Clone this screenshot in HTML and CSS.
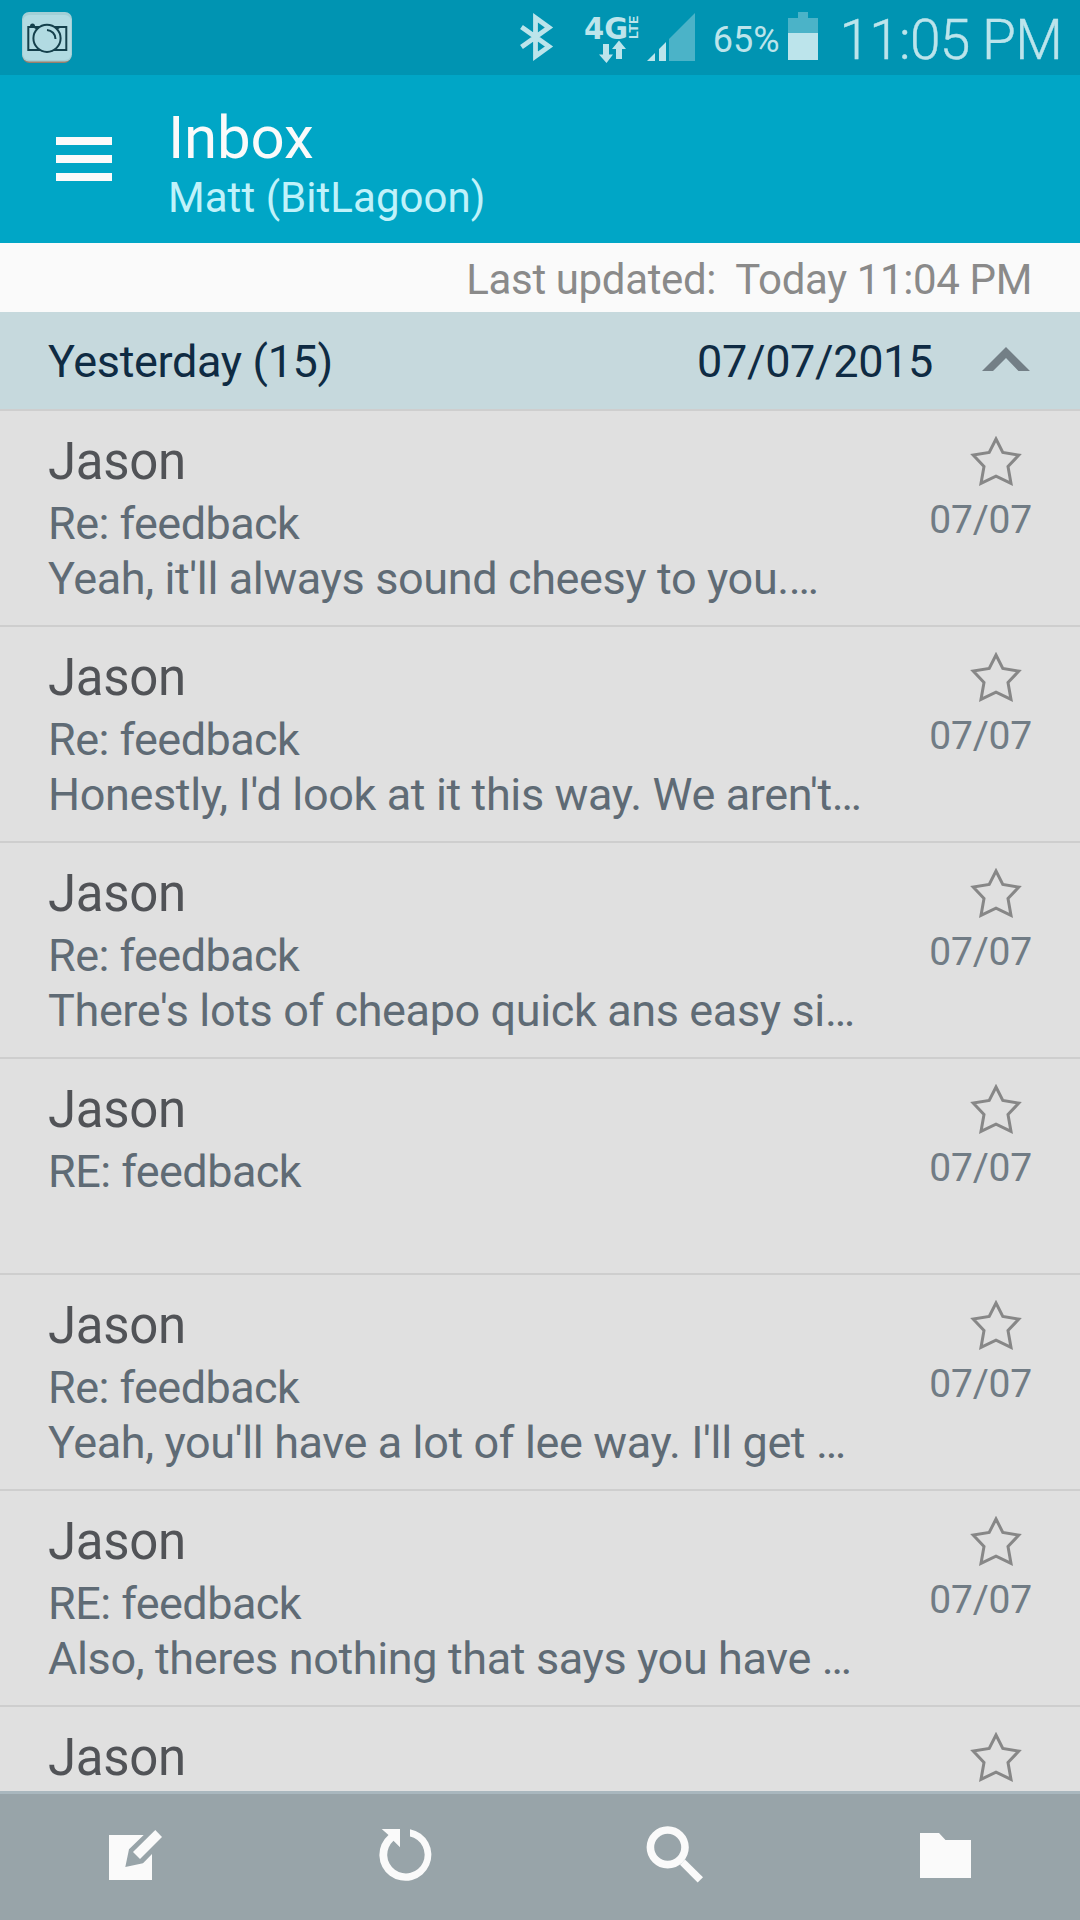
FILE: index.html
```html
<!DOCTYPE html>
<html lang="en">
<head>
    <meta charset="UTF-8">
    <meta name="viewport" content="width=device-width, initial-scale=1.0">
    <title>Inbox</title>
    <link rel="stylesheet" href="styles.css">
</head>
<body>
    <svg class="defs" width="0" height="0">
        <symbol id="star" viewBox="0 0 52 50">
            <path d="M26 3L32.800 16.500L48.800 19.100L38 30.500L41 47.400L26 40.200L11 47.400L14 30.500L3.200 19.100L19.200 16.500Z" fill="none" stroke="#878787" stroke-width="3"/>
        </symbol>
    </svg>

    <div class="status-bar">
        <svg class="camera" width="50" height="51" viewBox="0 0 50 51">
            <rect x="0.500" y="3" width="48.500" height="48" rx="7" fill="#9b7f6b"/>
            <rect x="0" y="0" width="50" height="49.500" rx="7" fill="#a3cfd6"/>
            <rect x="1" y="3" width="48" height="45" rx="6" fill="#b2dbe2"/>
            <g fill="none" stroke="#15404c" stroke-width="2">
                <path d="M6.300 15H44.300V38H6.300Z"/>
                <path d="M12 15L17 18M38 15L33 18" stroke-width="1.500"/>
                <circle cx="25" cy="26.300" r="13.600" fill="#b2dbe2"/>
                <path d="M25 18A9 9 0 0 1 33.500 27"/>
            </g>
            <path d="M8 14A2.500 2.500 0 0 1 13 14Z" fill="#15404c"/>
        </svg>

        <div class="status-icons">
            <svg class="bluetooth" width="34" height="48" viewBox="0 0 34 48">
                <path d="M1.500 14L29 33.500L15.500 43.200V4.800L29 14.500L1.500 34" fill="none" stroke="#bce4eb" stroke-width="4.800"/>
            </svg>
            <svg class="network" width="56" height="50" viewBox="0 0 56 50" fill="#bce4eb">
                <text class="net-4g" x="0" y="27" textLength="44" lengthAdjust="spacingAndGlyphs">4G</text>
                <text class="net-lte" transform="translate(54 27) rotate(-90)" x="0" y="0" textLength="23" lengthAdjust="spacingAndGlyphs">LTE</text>
                <path d="M19 32H25V42.500H29L22.500 51L15 42.500H19ZM35 28.500L42 37H38V47H32V37H28Z"/>
            </svg>
            <svg class="signal" width="48" height="48" viewBox="0 0 48 48">
                <path d="M0 48L8 40V48ZM12 36L19 29V48H12Z" fill="#bce4eb"/>
                <path d="M22 26L48 0V48H22Z" fill="#4bb3c8"/>
            </svg>
            <span class="percent">65%</span>
            <svg class="battery" width="30" height="48" viewBox="0 0 30 48">
                <path d="M10 0H20V6H30V21H0V6H10Z" fill="#4bb3c8"/>
                <path d="M0 21H30V48H0Z" fill="#bce4eb"/>
            </svg>
            <span class="clock">11:05 PM</span>
        </div>
    </div>

    <div class="header">
        <div class="menu">
            <span></span>
            <span></span>
            <span></span>
        </div>
        <div class="titles">
            <div class="title">Inbox</div>
            <div class="account">Matt (BitLagoon)</div>
        </div>
    </div>

    <div class="updated">Last updated:&nbsp; Today 11:04 PM</div>

    <div class="group">
        <span class="group-name">Yesterday (15)</span>
        <span class="group-date">07/07/2015</span>
        <svg width="48" height="24" viewBox="0 0 48 24">
            <path d="M0 24L24 0L48 24H36.500L24 11L11 24Z" fill="#737f86"/>
        </svg>
    </div>

    <div class="list">
        <div class="mail">
            <div class="mail-text">
                <div class="from">Jason</div>
                <div class="subject">Re: feedback</div>
                <div class="preview">Yeah, it'll always sound cheesy to you.…</div>
            </div>
            <div class="mail-side">
                <svg class="star" width="52" height="50"><use href="#star"/></svg>
                <div class="date">07/07</div>
            </div>
        </div>
        <div class="mail">
            <div class="mail-text">
                <div class="from">Jason</div>
                <div class="subject">Re: feedback</div>
                <div class="preview">Honestly, I'd look at it this way. We aren't…</div>
            </div>
            <div class="mail-side">
                <svg class="star" width="52" height="50"><use href="#star"/></svg>
                <div class="date">07/07</div>
            </div>
        </div>
        <div class="mail">
            <div class="mail-text">
                <div class="from">Jason</div>
                <div class="subject">Re: feedback</div>
                <div class="preview">There's lots of cheapo quick ans easy si…</div>
            </div>
            <div class="mail-side">
                <svg class="star" width="52" height="50"><use href="#star"/></svg>
                <div class="date">07/07</div>
            </div>
        </div>
        <div class="mail">
            <div class="mail-text">
                <div class="from">Jason</div>
                <div class="subject">RE: feedback</div>
            </div>
            <div class="mail-side">
                <svg class="star" width="52" height="50"><use href="#star"/></svg>
                <div class="date">07/07</div>
            </div>
        </div>
        <div class="mail">
            <div class="mail-text">
                <div class="from">Jason</div>
                <div class="subject">Re: feedback</div>
                <div class="preview">Yeah, you'll have a lot of lee way. I'll get …</div>
            </div>
            <div class="mail-side">
                <svg class="star" width="52" height="50"><use href="#star"/></svg>
                <div class="date">07/07</div>
            </div>
        </div>
        <div class="mail">
            <div class="mail-text">
                <div class="from">Jason</div>
                <div class="subject">RE: feedback</div>
                <div class="preview">Also, theres nothing that says you have …</div>
            </div>
            <div class="mail-side">
                <svg class="star" width="52" height="50"><use href="#star"/></svg>
                <div class="date">07/07</div>
            </div>
        </div>
        <div class="mail">
            <div class="mail-text">
                <div class="from">Jason</div>
            </div>
            <div class="mail-side">
                <svg class="star" width="52" height="50"><use href="#star"/></svg>
            </div>
        </div>
    </div>

    <div class="toolbar">
        <div class="tool">
            <svg width="60" height="60" viewBox="0 0 60 60" fill="#fafafa">
                <path d="M4 10H38.700L24 24.300L20.300 42L38 38.300L47 29V55H4Z"/>
                <path d="M50.300 5L57 12L35 34L28 27Z"/>
            </svg>
        </div>
        <div class="tool">
            <svg width="60" height="60" viewBox="0 0 60 60" fill="#fafafa">
                <path d="M35 4.200A26 26 0 1 1 13.500 10L6.700 4H25V22.300L18.500 15.800A18.700 18.700 0 1 0 35 11.500Z"/>
            </svg>
        </div>
        <div class="tool">
            <svg width="60" height="60" viewBox="0 0 60 60" fill="#fafafa">
                <circle cx="22.700" cy="22.300" r="17.300" fill="none" stroke="#fafafa" stroke-width="7.600"/>
                <path d="M40 34.500L58 52.300L52.700 57.500L35 39.700Z"/>
            </svg>
        </div>
        <div class="tool">
            <svg width="60" height="60" viewBox="0 0 60 60" fill="#fafafa">
                <path d="M5 8H24L30.500 15H56V53H5Z"/>
            </svg>
        </div>
    </div>
</body>
</html>
```

FILE: styles.css
```css
* {
    box-sizing: border-box;
}

body {
    margin: 0;
    height: 1920px;
    display: flex;
    flex-direction: column;
    overflow: hidden;
    background: #e0e0e0;
    font-family: Roboto, "Noto Sans", sans-serif;
    white-space: nowrap;
}

svg {
    display: block;
    flex-shrink: 0;
}

.defs {
    position: absolute;
}

.status-bar {
    flex: 0 0 75px;
    display: flex;
    justify-content: space-between;
    align-items: flex-start;
    padding: 12px 18px 0 22px;
    background: #0094b2;
    color: #bce4eb;
}

.status-icons {
    display: flex;
    align-items: flex-start;
}

.bluetooth {
    margin-top: 1px;
}

.network {
    margin-left: 30px;
    overflow: visible;
}

.net-4g {
    font-family: "DejaVu Sans", sans-serif;
    font-weight: bold;
    font-size: 30px;
}

.net-lte {
    font-family: Roboto, sans-serif;
    font-weight: bold;
    font-size: 12px;
}

.signal {
    margin: 1px 0 0 7px;
}

.percent {
    margin: 4px 8px 0 18px;
    font-size: 36px;
    line-height: 48px;
}

.clock {
    margin: -2px 0 0 22px;
    font-size: 55px;
    font-weight: 300;
    line-height: 60px;
    letter-spacing: -0.75px;
    -webkit-text-stroke: 0.4px #bce4eb;
}

.header {
    flex: 0 0 168px;
    display: flex;
    padding: 31px 56px 0;
    background: #00a6c6;
}

.menu {
    display: flex;
    flex-direction: column;
    gap: 10px;
    width: 56px;
    margin-top: 31px;
}

.menu span {
    height: 8px;
    background: #fafafa;
}

.titles {
    margin-left: 56px;
}

.title {
    font-size: 60px;
    line-height: 63px;
    letter-spacing: -0.2px;
    color: #fafafa;
}

.account {
    font-size: 42px;
    line-height: 58px;
    letter-spacing: 0.05px;
    color: #c0f2fa;
}

.updated {
    flex: 0 0 69px;
    padding: 4px 48px 0 0;
    background: #fafafa;
    color: #8a8a8a;
    font-size: 42px;
    line-height: 65px;
    letter-spacing: -0.36px;
    text-align: right;
}

.group {
    flex: 0 0 97px;
    display: flex;
    align-items: center;
    padding: 2px 50px 0 48px;
    background: #c6d9dd;
    color: #0f2b43;
    font-size: 45px;
    letter-spacing: -0.35px;
}

.group-date {
    margin-left: auto;
    margin-right: 49px;
}

.group svg {
    margin-top: -6px;
}

.list {
    flex: 1;
    min-height: 0;
    overflow: hidden;
}

.mail {
    display: flex;
    justify-content: space-between;
    height: 216px;
    padding: 16px 48px 0;
    border-top: 2px solid #cecece;
}

.from {
    font-size: 51px;
    line-height: 69px;
    letter-spacing: -0.35px;
    color: #515357;
}

.subject,
.preview {
    font-size: 45px;
    line-height: 55px;
    letter-spacing: -0.38px;
    color: #5f6b75;
}

.subject {
    letter-spacing: -0.55px;
}

.mail-side {
    display: flex;
    flex-direction: column;
    align-items: flex-end;
    padding-top: 9px;
}

.star {
    margin-right: 10px;
}

.date {
    margin-top: 9px;
    font-size: 39px;
    line-height: 50px;
    letter-spacing: -0.2px;
    color: #717c85;
}

.toolbar {
    flex: 0 0 129px;
    display: flex;
    padding-bottom: 4px;
    border-top: 3px solid #a9b7be;
    background: #98a4a9;
}

.tool {
    flex: 1;
    display: flex;
    align-items: center;
    justify-content: center;
}
```
